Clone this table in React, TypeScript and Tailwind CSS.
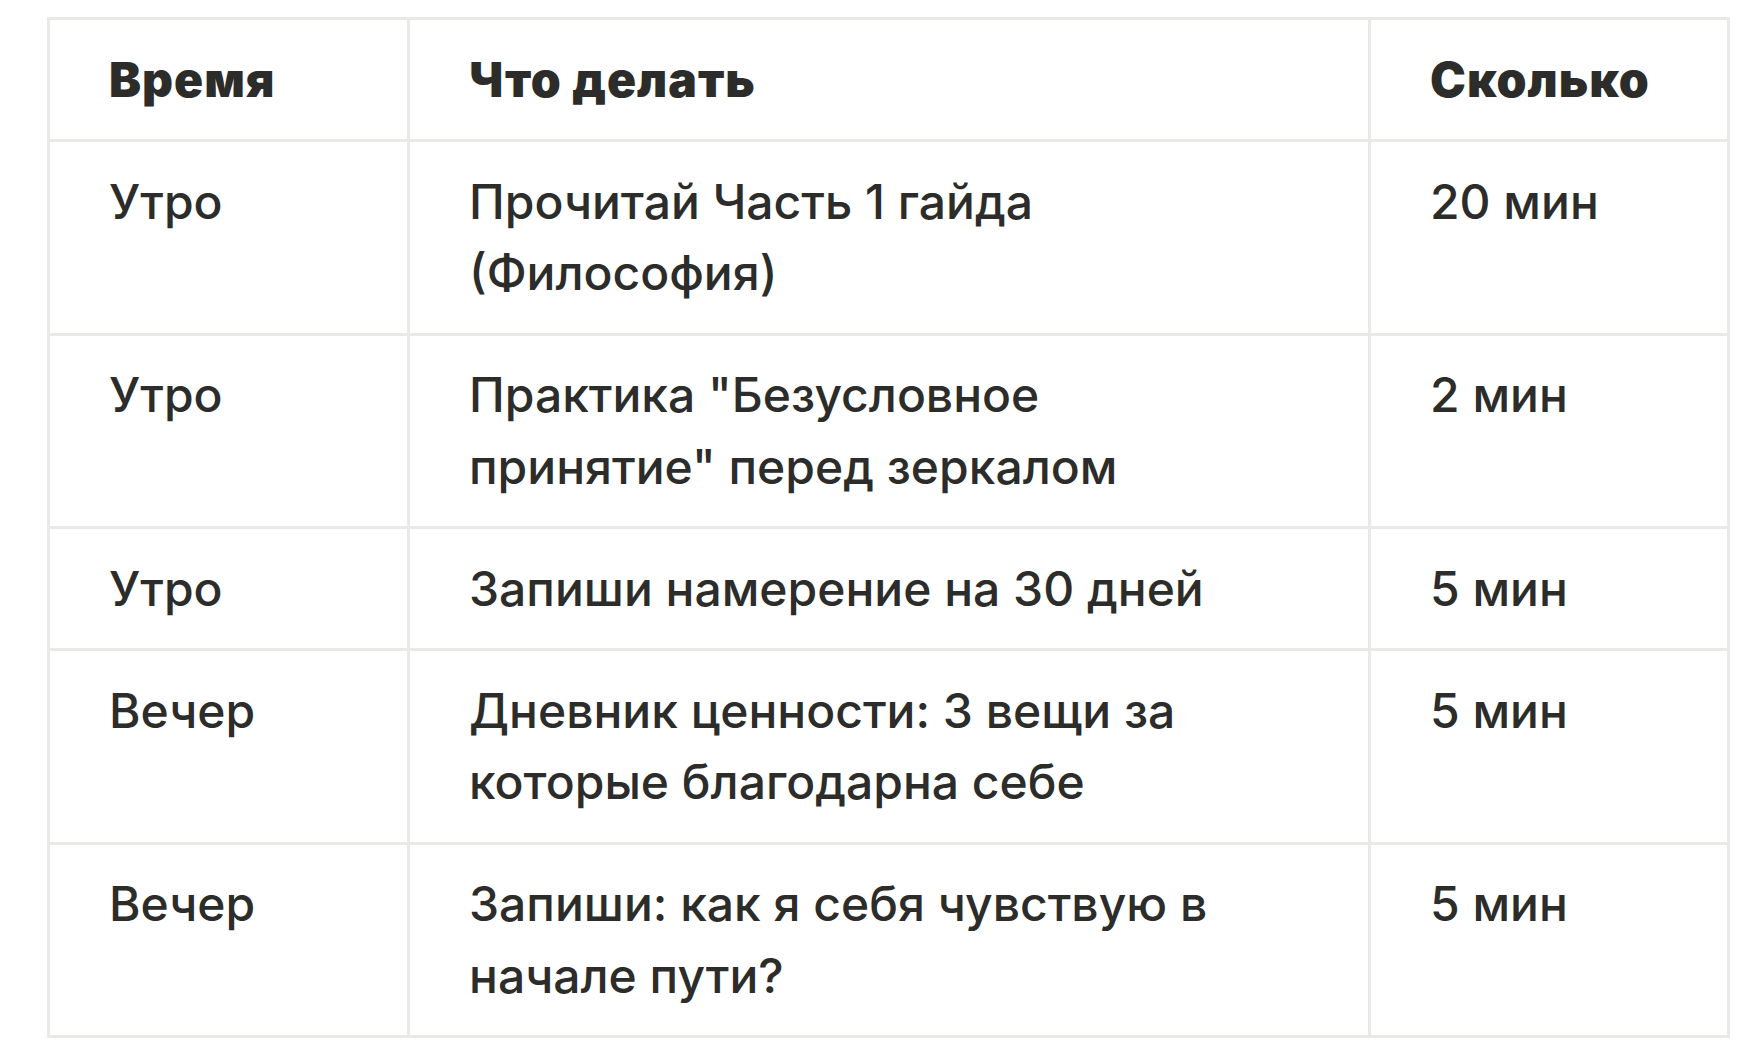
const rows: { time: string; what: string[]; amount: string }[] = [
  { time: "Утро", what: ["Прочитай Часть 1 гайда", "(Философия)"], amount: "20 мин" },
  { time: "Утро", what: ['Практика "Безусловное', 'принятие" перед зеркалом'], amount: "2 мин" },
  { time: "Утро", what: ["Запиши намерение на 30 дней"], amount: "5 мин" },
  { time: "Вечер", what: ["Дневник ценности: 3 вещи за", "которые благодарна себе"], amount: "5 мин" },
  { time: "Вечер", what: ["Запиши: как я себя чувствую в", "начале пути?"], amount: "5 мин" },
];

const cell = "border-[3px] border-[#e9e9e8] px-[59px] py-[23.75px] align-top text-left";

export default function App() {
  return (
    <div className="min-h-screen bg-white pt-[17px] pl-[47px] font-['Inter','Noto_Sans',sans-serif] text-[#2c2c2a]">
      <table className="w-[1680px] border-collapse table-fixed text-[48px] leading-[71.5px]">
        <colgroup>
          <col className="w-[360px]" />
          <col className="w-[961px]" />
          <col className="w-[359px]" />
        </colgroup>
        <thead>
          <tr>
            <th className={`${cell} font-black tracking-[1px]`}>Время</th>
            <th className={`${cell} font-black tracking-[1px]`}>Что делать</th>
            <th className={`${cell} font-black tracking-[1px]`}>Сколько</th>
          </tr>
        </thead>
        <tbody>
          {rows.map((r, i) => (
            <tr key={i}>
              <td className={`${cell} font-medium`}>{r.time}</td>
              <td className={`${cell} font-medium whitespace-nowrap`}>
                {r.what.map((line, j) => (
                  <div key={j}>{line}</div>
                ))}
              </td>
              <td className={`${cell} font-medium`}>{r.amount}</td>
            </tr>
          ))}
        </tbody>
      </table>
    </div>
  );
}
